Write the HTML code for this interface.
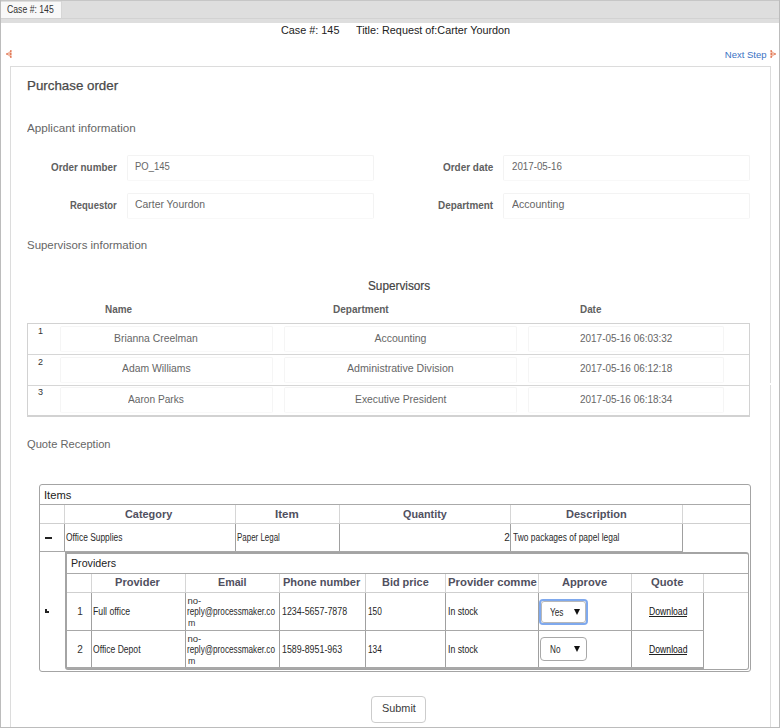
<!DOCTYPE html>
<html><head><meta charset="utf-8"><style>
html,body{margin:0;padding:0;}
body{width:780px;height:728px;overflow:hidden;position:relative;background:#fff;font-family:"Liberation Sans", sans-serif;}
.t{position:absolute;white-space:pre;}
</style></head><body>
<div style="position:absolute;left:0px;top:0px;width:780px;height:23px;background:#dedede"></div>
<div style="position:absolute;left:0px;top:0px;width:780px;height:1px;background:#c6c6c6"></div>
<div style="position:absolute;left:1px;top:2px;width:60px;height:16px;background:#f8f8f8"></div>
<div style="position:absolute;left:61px;top:1px;width:1px;height:17px;background:#d6d6d6"></div>
<div style="position:absolute;left:0px;top:18px;width:780px;height:1px;background:#d2d2d2"></div>
<div style="position:absolute;left:0px;top:0px;width:1px;height:728px;background:#bcbcbc"></div>
<div style="position:absolute;left:779px;top:0px;width:1px;height:728px;background:#bcbcbc"></div>
<div style="position:absolute;left:0px;top:727px;width:780px;height:1px;background:#bcbcbc"></div>
<div style="position:absolute;left:10px;top:66px;width:761px;height:661px;box-sizing:border-box;border:1px solid #dcdcdc;border-bottom:none"></div>
<div style="position:absolute;left:770px;top:383px;width:1px;height:2px;background:#fff"></div>
<div style="position:absolute;left:127px;top:155px;width:247px;height:26px;box-sizing:border-box;border:1px solid #f3f3f3;border-bottom-color:#f8f8f8;border-radius:2px"></div>
<div style="position:absolute;left:127px;top:193px;width:247px;height:26px;box-sizing:border-box;border:1px solid #f3f3f3;border-bottom-color:#f8f8f8;border-radius:2px"></div>
<div style="position:absolute;left:503px;top:155px;width:247px;height:26px;box-sizing:border-box;border:1px solid #f3f3f3;border-bottom-color:#f8f8f8;border-radius:2px"></div>
<div style="position:absolute;left:503px;top:193px;width:247px;height:26px;box-sizing:border-box;border:1px solid #f3f3f3;border-bottom-color:#f8f8f8;border-radius:2px"></div>
<div style="position:absolute;left:27px;top:323px;width:723px;height:94px;box-sizing:border-box;border:1px solid #d2d2d2;border-bottom:2px solid #d2d2d2"></div>
<div style="position:absolute;left:28px;top:354px;width:721px;height:1px;background:#d6d6d6"></div>
<div style="position:absolute;left:28px;top:385px;width:721px;height:1px;background:#d6d6d6"></div>
<div style="position:absolute;left:60px;top:326px;width:213px;height:26px;box-sizing:border-box;border:1px solid #f5f5f5;border-bottom-color:#f9f9f9;border-radius:2px"></div>
<div style="position:absolute;left:284px;top:326px;width:233px;height:26px;box-sizing:border-box;border:1px solid #f5f5f5;border-bottom-color:#f9f9f9;border-radius:2px"></div>
<div style="position:absolute;left:528px;top:326px;width:196px;height:26px;box-sizing:border-box;border:1px solid #f5f5f5;border-bottom-color:#f9f9f9;border-radius:2px"></div>
<div style="position:absolute;left:60px;top:357px;width:213px;height:26px;box-sizing:border-box;border:1px solid #f5f5f5;border-bottom-color:#f9f9f9;border-radius:2px"></div>
<div style="position:absolute;left:284px;top:357px;width:233px;height:26px;box-sizing:border-box;border:1px solid #f5f5f5;border-bottom-color:#f9f9f9;border-radius:2px"></div>
<div style="position:absolute;left:528px;top:357px;width:196px;height:26px;box-sizing:border-box;border:1px solid #f5f5f5;border-bottom-color:#f9f9f9;border-radius:2px"></div>
<div style="position:absolute;left:60px;top:387px;width:213px;height:26px;box-sizing:border-box;border:1px solid #f5f5f5;border-bottom-color:#f9f9f9;border-radius:2px"></div>
<div style="position:absolute;left:284px;top:387px;width:233px;height:26px;box-sizing:border-box;border:1px solid #f5f5f5;border-bottom-color:#f9f9f9;border-radius:2px"></div>
<div style="position:absolute;left:528px;top:387px;width:196px;height:26px;box-sizing:border-box;border:1px solid #f5f5f5;border-bottom-color:#f9f9f9;border-radius:2px"></div>
<div style="position:absolute;left:39px;top:484px;width:712px;height:188px;box-sizing:border-box;border:1px solid #a4a4a4;border-radius:3px"></div>
<div style="position:absolute;left:40px;top:504px;width:710px;height:1px;background:#aaaaaa"></div>
<div style="position:absolute;left:40px;top:523px;width:710px;height:1px;background:#cfcfcf"></div>
<div style="position:absolute;left:64px;top:505px;width:1px;height:18px;background:#d6d6d6"></div>
<div style="position:absolute;left:64px;top:524px;width:1px;height:27px;background:#a0a0a0"></div>
<div style="position:absolute;left:235px;top:505px;width:1px;height:18px;background:#d6d6d6"></div>
<div style="position:absolute;left:235px;top:524px;width:1px;height:27px;background:#a0a0a0"></div>
<div style="position:absolute;left:339px;top:505px;width:1px;height:18px;background:#d6d6d6"></div>
<div style="position:absolute;left:339px;top:524px;width:1px;height:27px;background:#a0a0a0"></div>
<div style="position:absolute;left:510px;top:505px;width:1px;height:18px;background:#d6d6d6"></div>
<div style="position:absolute;left:510px;top:524px;width:1px;height:27px;background:#a0a0a0"></div>
<div style="position:absolute;left:682px;top:505px;width:1px;height:18px;background:#d6d6d6"></div>
<div style="position:absolute;left:682px;top:524px;width:1px;height:27px;background:#a0a0a0"></div>
<div style="position:absolute;left:40px;top:551px;width:643px;height:1px;background:#a8a8a8"></div>
<div style="position:absolute;left:45px;top:537px;width:7px;height:2px;background:#222"></div>
<div style="position:absolute;left:45px;top:609px;width:2px;height:4px;background:#222"></div>
<div style="position:absolute;left:45px;top:611px;width:4px;height:2px;background:#222"></div>
<div style="position:absolute;left:65px;top:552px;width:684px;height:118px;box-sizing:border-box;border:1px solid #a4a4a4;border-left:2px solid #a4a4a4;border-top:2px solid #a4a4a4;border-radius:0 3px 3px 3px"></div>
<div style="position:absolute;left:67px;top:573px;width:681px;height:1px;background:#aaaaaa"></div>
<div style="position:absolute;left:67px;top:592px;width:681px;height:1px;background:#cfcfcf"></div>
<div style="position:absolute;left:91px;top:574px;width:1px;height:18px;background:#d6d6d6"></div>
<div style="position:absolute;left:91px;top:593px;width:1px;height:75px;background:#a0a0a0"></div>
<div style="position:absolute;left:185px;top:574px;width:1px;height:18px;background:#d6d6d6"></div>
<div style="position:absolute;left:185px;top:593px;width:1px;height:75px;background:#a0a0a0"></div>
<div style="position:absolute;left:279px;top:574px;width:1px;height:18px;background:#d6d6d6"></div>
<div style="position:absolute;left:279px;top:593px;width:1px;height:75px;background:#a0a0a0"></div>
<div style="position:absolute;left:365px;top:574px;width:1px;height:18px;background:#d6d6d6"></div>
<div style="position:absolute;left:365px;top:593px;width:1px;height:75px;background:#a0a0a0"></div>
<div style="position:absolute;left:445px;top:574px;width:1px;height:18px;background:#d6d6d6"></div>
<div style="position:absolute;left:445px;top:593px;width:1px;height:75px;background:#a0a0a0"></div>
<div style="position:absolute;left:538px;top:574px;width:1px;height:18px;background:#d6d6d6"></div>
<div style="position:absolute;left:538px;top:593px;width:1px;height:75px;background:#a0a0a0"></div>
<div style="position:absolute;left:631px;top:574px;width:1px;height:18px;background:#d6d6d6"></div>
<div style="position:absolute;left:631px;top:593px;width:1px;height:75px;background:#a0a0a0"></div>
<div style="position:absolute;left:703px;top:574px;width:1px;height:18px;background:#d6d6d6"></div>
<div style="position:absolute;left:703px;top:593px;width:1px;height:75px;background:#a0a0a0"></div>
<div style="position:absolute;left:67px;top:630px;width:637px;height:1px;background:#a8a8a8"></div>
<div style="position:absolute;left:67px;top:667px;width:637px;height:2px;background:#a8a8a8"></div>
<div style="position:absolute;left:539px;top:599px;width:49px;height:26px;box-sizing:border-box;border:2px solid #7fa9ee;border-radius:4px"></div>
<div style="position:absolute;left:541px;top:601px;width:45px;height:22px;box-sizing:border-box;border:1px solid #b8b8b8;border-radius:3px"></div>
<div style="position:absolute;left:540px;top:637px;width:47px;height:24px;box-sizing:border-box;border:1px solid #a8a8a8;border-radius:4px"></div>
<div style="position:absolute;left:574px;top:609px;width:0px;height:0px;border-left:3px solid transparent;border-right:3px solid transparent;border-top:6px solid #111"></div>
<div style="position:absolute;left:574px;top:646px;width:0px;height:0px;border-left:3px solid transparent;border-right:3px solid transparent;border-top:6px solid #111"></div>
<div style="position:absolute;left:649px;top:616px;width:38px;height:1px;background:#222"></div>
<div style="position:absolute;left:649px;top:654px;width:38px;height:1px;background:#222"></div>
<div style="position:absolute;left:371px;top:696px;width:55px;height:27px;box-sizing:border-box;border:1px solid #cccccc;border-radius:4px;background:#fff"></div>
<svg style="position:absolute;left:6px;top:50px" width="6" height="8" viewBox="0 0 6 8"><polygon points="5.5,0 0,4 5.5,8" fill="#e8825a" fill-opacity="0.55"/><circle cx="4.8" cy="1" r="0.75" fill="#d4451a"/><circle cx="4.8" cy="4" r="0.75" fill="#d4451a"/><circle cx="4.8" cy="7" r="0.75" fill="#d4451a"/><circle cx="1" cy="4" r="0.75" fill="#d4451a"/></svg>
<svg style="position:absolute;left:770px;top:50px" width="6" height="8" viewBox="0 0 6 8"><polygon points="0.5,0 6,4 0.5,8" fill="#e8825a" fill-opacity="0.55"/><circle cx="1.2" cy="1" r="0.75" fill="#d4451a"/><circle cx="1.2" cy="4" r="0.75" fill="#d4451a"/><circle cx="1.2" cy="7" r="0.75" fill="#d4451a"/><circle cx="5" cy="4" r="0.75" fill="#d4451a"/></svg>
<div class="t" style="left:6.80px;top:3px;font-size:10px;line-height:14px;font-weight:400;color:#333;transform:scaleX(0.8664);transform-origin:0 0;">Case #: 145</div>
<div class="t" style="left:281.40px;top:22px;font-size:11px;line-height:16px;font-weight:400;color:#222;transform:scaleX(0.9848);transform-origin:0 0;">Case #: 145</div>
<div class="t" style="left:355.50px;top:22px;font-size:11px;line-height:16px;font-weight:400;color:#222;transform:scaleX(0.9833);transform-origin:0 0;">Title: Request of:Carter Yourdon</div>
<div class="t" style="left:724.80px;top:48px;font-size:9.5px;line-height:14px;font-weight:400;color:#3a72c4;">Next Step</div>
<div class="t" style="left:26.67px;top:76px;font-size:13px;line-height:19px;font-weight:400;color:#4a4a4a;transform:scaleX(1.0254);transform-origin:0 0;-webkit-text-stroke:0.25px #4a4a4a">Purchase order</div>
<div class="t" style="left:27.30px;top:120px;font-size:11px;line-height:16px;font-weight:400;color:#666;transform:scaleX(1.0594);transform-origin:0 0;">Applicant information</div>
<div class="t" style="left:50.70px;top:159px;font-size:11.5px;line-height:17px;font-weight:700;color:#606060;transform:scaleX(0.8574);transform-origin:0 0;">Order number</div>
<div class="t" style="left:69.70px;top:197px;font-size:11.5px;line-height:17px;font-weight:700;color:#606060;transform:scaleX(0.8224);transform-origin:0 0;">Requestor</div>
<div class="t" style="left:443.30px;top:159px;font-size:11.5px;line-height:17px;font-weight:700;color:#606060;transform:scaleX(0.8639);transform-origin:0 0;">Order date</div>
<div class="t" style="left:437.80px;top:197px;font-size:11.5px;line-height:17px;font-weight:700;color:#606060;transform:scaleX(0.8615);transform-origin:0 0;">Department</div>
<div class="t" style="left:135.40px;top:160px;font-size:10px;line-height:14px;font-weight:400;color:#666;transform:scaleX(0.9453);transform-origin:0 0;">PO_145</div>
<div class="t" style="left:135.40px;top:198px;font-size:10px;line-height:14px;font-weight:400;color:#666;transform:scaleX(1.0405);transform-origin:0 0;">Carter Yourdon</div>
<div class="t" style="left:512.00px;top:160px;font-size:10px;line-height:14px;font-weight:400;color:#666;transform:scaleX(0.9750);transform-origin:0 0;">2017-05-16</div>
<div class="t" style="left:512.00px;top:198px;font-size:10px;line-height:14px;font-weight:400;color:#666;transform:scaleX(1.0569);transform-origin:0 0;">Accounting</div>
<div class="t" style="left:27.30px;top:237px;font-size:11px;line-height:16px;font-weight:400;color:#666;transform:scaleX(1.0396);transform-origin:0 0;">Supervisors information</div>
<div class="t" style="left:367.60px;top:276px;font-size:13px;line-height:19px;font-weight:400;color:#444;transform:scaleX(0.9054);transform-origin:0 0;-webkit-text-stroke:0.2px #444">Supervisors</div>
<div class="t" style="left:104.60px;top:301px;font-size:11px;line-height:16px;font-weight:700;color:#606060;transform:scaleX(0.9014);transform-origin:0 0;">Name</div>
<div class="t" style="left:332.70px;top:301px;font-size:11px;line-height:16px;font-weight:700;color:#606060;transform:scaleX(0.9112);transform-origin:0 0;">Department</div>
<div class="t" style="left:579.70px;top:301px;font-size:11px;line-height:16px;font-weight:700;color:#606060;transform:scaleX(0.8978);transform-origin:0 0;">Date</div>
<div class="t" style="left:38.00px;top:325px;font-size:9px;line-height:13px;font-weight:400;color:#333;">1</div>
<div class="t" style="left:114.40px;top:331px;font-size:10.5px;line-height:15px;font-weight:400;color:#666;transform:scaleX(0.9907);transform-origin:0 0;">Brianna Creelman</div>
<div class="t" style="left:374.50px;top:331px;font-size:10.5px;line-height:15px;font-weight:400;color:#666;">Accounting</div>
<div class="t" style="left:580.10px;top:331px;font-size:10.5px;line-height:15px;font-weight:400;color:#666;transform:scaleX(0.9472);transform-origin:0 0;">2017-05-16 06:03:32</div>
<div class="t" style="left:38.00px;top:356px;font-size:9px;line-height:13px;font-weight:400;color:#333;">2</div>
<div class="t" style="left:121.90px;top:361px;font-size:10.5px;line-height:15px;font-weight:400;color:#666;transform:scaleX(0.9888);transform-origin:0 0;">Adam Williams</div>
<div class="t" style="left:347.00px;top:361px;font-size:10.5px;line-height:15px;font-weight:400;color:#666;transform:scaleX(1.0106);transform-origin:0 0;">Administrative Division</div>
<div class="t" style="left:580.10px;top:361px;font-size:10.5px;line-height:15px;font-weight:400;color:#666;transform:scaleX(0.9472);transform-origin:0 0;">2017-05-16 06:12:18</div>
<div class="t" style="left:38.00px;top:386px;font-size:9px;line-height:13px;font-weight:400;color:#333;">3</div>
<div class="t" style="left:128.40px;top:392px;font-size:10.5px;line-height:15px;font-weight:400;color:#666;transform:scaleX(0.9665);transform-origin:0 0;">Aaron Parks</div>
<div class="t" style="left:354.80px;top:392px;font-size:10.5px;line-height:15px;font-weight:400;color:#666;transform:scaleX(0.9851);transform-origin:0 0;">Executive President</div>
<div class="t" style="left:580.10px;top:392px;font-size:10.5px;line-height:15px;font-weight:400;color:#666;transform:scaleX(0.9472);transform-origin:0 0;">2017-05-16 06:18:34</div>
<div class="t" style="left:27.40px;top:436px;font-size:11px;line-height:16px;font-weight:400;color:#666;transform:scaleX(1.0117);transform-origin:0 0;">Quote Reception</div>
<div class="t" style="left:43.50px;top:489px;font-size:10px;line-height:14px;font-weight:400;color:#222;transform:scaleX(1.1166);transform-origin:0 0;">Items</div>
<div class="t" style="left:125.00px;top:506px;font-size:11px;line-height:16px;font-weight:700;color:#505060;transform:scaleX(0.9905);transform-origin:0 0;">Category</div>
<div class="t" style="left:275.00px;top:506px;font-size:11px;line-height:16px;font-weight:700;color:#505060;transform:scaleX(1.0509);transform-origin:0 0;">Item</div>
<div class="t" style="left:402.70px;top:506px;font-size:11px;line-height:16px;font-weight:700;color:#505060;transform:scaleX(0.9803);transform-origin:0 0;">Quantity</div>
<div class="t" style="left:565.70px;top:506px;font-size:11px;line-height:16px;font-weight:700;color:#505060;transform:scaleX(1.0034);transform-origin:0 0;">Description</div>
<div class="t" style="left:66.20px;top:531px;font-size:10px;line-height:14px;font-weight:400;color:#2a2a2a;transform:scaleX(0.8408);transform-origin:0 0;">Office Supplies</div>
<div class="t" style="left:237.30px;top:531px;font-size:10px;line-height:14px;font-weight:400;color:#2a2a2a;transform:scaleX(0.7950);transform-origin:0 0;">Paper Legal</div>
<div class="t" style="left:504.30px;top:531px;font-size:10px;line-height:14px;font-weight:400;color:#2a2a2a;">2</div>
<div class="t" style="left:512.70px;top:531px;font-size:10px;line-height:14px;font-weight:400;color:#2a2a2a;transform:scaleX(0.8438);transform-origin:0 0;">Two packages of papel legal</div>
<div class="t" style="left:70.80px;top:557px;font-size:10px;line-height:14px;font-weight:400;color:#222;transform:scaleX(1.0678);transform-origin:0 0;">Providers</div>
<div class="t" style="left:115.40px;top:574px;font-size:11px;line-height:16px;font-weight:700;color:#505060;transform:scaleX(1.0056);transform-origin:0 0;">Provider</div>
<div class="t" style="left:217.50px;top:574px;font-size:11px;line-height:16px;font-weight:700;color:#505060;transform:scaleX(0.9730);transform-origin:0 0;">Email</div>
<div class="t" style="left:282.70px;top:574px;font-size:11px;line-height:16px;font-weight:700;color:#505060;transform:scaleX(1.0035);transform-origin:0 0;">Phone number</div>
<div class="t" style="left:381.70px;top:574px;font-size:11px;line-height:16px;font-weight:700;color:#505060;transform:scaleX(0.9926);transform-origin:0 0;">Bid price</div>
<div class="t" style="left:448.30px;top:574px;font-size:11px;line-height:16px;font-weight:700;color:#505060;transform:scaleX(1.0304);transform-origin:0 0;">Provider comme</div>
<div class="t" style="left:562.30px;top:574px;font-size:11px;line-height:16px;font-weight:700;color:#505060;transform:scaleX(1.0112);transform-origin:0 0;">Approve</div>
<div class="t" style="left:651.00px;top:574px;font-size:11px;line-height:16px;font-weight:700;color:#505060;transform:scaleX(1.0203);transform-origin:0 0;">Quote</div>
<div class="t" style="left:77.20px;top:605px;font-size:10px;line-height:14px;font-weight:400;color:#333;">1</div>
<div class="t" style="left:93.10px;top:605px;font-size:10px;line-height:14px;font-weight:400;color:#2a2a2a;transform:scaleX(0.8711);transform-origin:0 0;">Full office</div>
<div class="t" style="left:187.40px;top:594px;font-size:9.5px;line-height:14px;font-weight:400;color:#333;">no-</div>
<div class="t" style="left:187.40px;top:605px;font-size:10px;line-height:14px;font-weight:400;color:#2a2a2a;transform:scaleX(0.8187);transform-origin:0 0;">reply@processmaker.co</div>
<div class="t" style="left:187.80px;top:616px;font-size:9.5px;line-height:14px;font-weight:400;color:#333;transform:scaleX(0.9250);transform-origin:0 0;">m</div>
<div class="t" style="left:281.50px;top:605px;font-size:10px;line-height:14px;font-weight:400;color:#2a2a2a;transform:scaleX(0.8871);transform-origin:0 0;">1234-5657-7878</div>
<div class="t" style="left:367.50px;top:605px;font-size:10px;line-height:14px;font-weight:400;color:#222;transform:scaleX(0.8293);transform-origin:0 0;">150</div>
<div class="t" style="left:447.50px;top:605px;font-size:10px;line-height:14px;font-weight:400;color:#222;transform:scaleX(0.8686);transform-origin:0 0;">In stock</div>
<div class="t" style="left:648.90px;top:605px;font-size:10px;line-height:14px;font-weight:400;color:#111;transform:scaleX(0.8654);transform-origin:0 0;">Download</div>
<div class="t" style="left:77.20px;top:643px;font-size:10px;line-height:14px;font-weight:400;color:#333;">2</div>
<div class="t" style="left:93.10px;top:643px;font-size:10px;line-height:14px;font-weight:400;color:#2a2a2a;transform:scaleX(0.8576);transform-origin:0 0;">Office Depot</div>
<div class="t" style="left:187.40px;top:632px;font-size:9.5px;line-height:14px;font-weight:400;color:#333;">no-</div>
<div class="t" style="left:187.40px;top:643px;font-size:10px;line-height:14px;font-weight:400;color:#2a2a2a;transform:scaleX(0.8187);transform-origin:0 0;">reply@processmaker.co</div>
<div class="t" style="left:187.80px;top:654px;font-size:9.5px;line-height:14px;font-weight:400;color:#333;transform:scaleX(0.9250);transform-origin:0 0;">m</div>
<div class="t" style="left:281.50px;top:643px;font-size:10px;line-height:14px;font-weight:400;color:#2a2a2a;transform:scaleX(0.8861);transform-origin:0 0;">1589-8951-963</div>
<div class="t" style="left:367.50px;top:643px;font-size:10px;line-height:14px;font-weight:400;color:#222;transform:scaleX(0.8293);transform-origin:0 0;">134</div>
<div class="t" style="left:447.50px;top:643px;font-size:10px;line-height:14px;font-weight:400;color:#222;transform:scaleX(0.8686);transform-origin:0 0;">In stock</div>
<div class="t" style="left:648.90px;top:643px;font-size:10px;line-height:14px;font-weight:400;color:#111;transform:scaleX(0.8654);transform-origin:0 0;">Download</div>
<div class="t" style="left:549.90px;top:606px;font-size:10px;line-height:14px;font-weight:400;color:#2a2a2a;transform:scaleX(0.8275);transform-origin:0 0;">Yes</div>
<div class="t" style="left:550.40px;top:643px;font-size:10px;line-height:14px;font-weight:400;color:#2a2a2a;transform:scaleX(0.8168);transform-origin:0 0;">No</div>
<div class="t" style="left:382.00px;top:701px;font-size:10.5px;line-height:15px;font-weight:400;color:#3a3a3a;transform:scaleX(1.0347);transform-origin:0 0;">Submit</div>
</body></html>
